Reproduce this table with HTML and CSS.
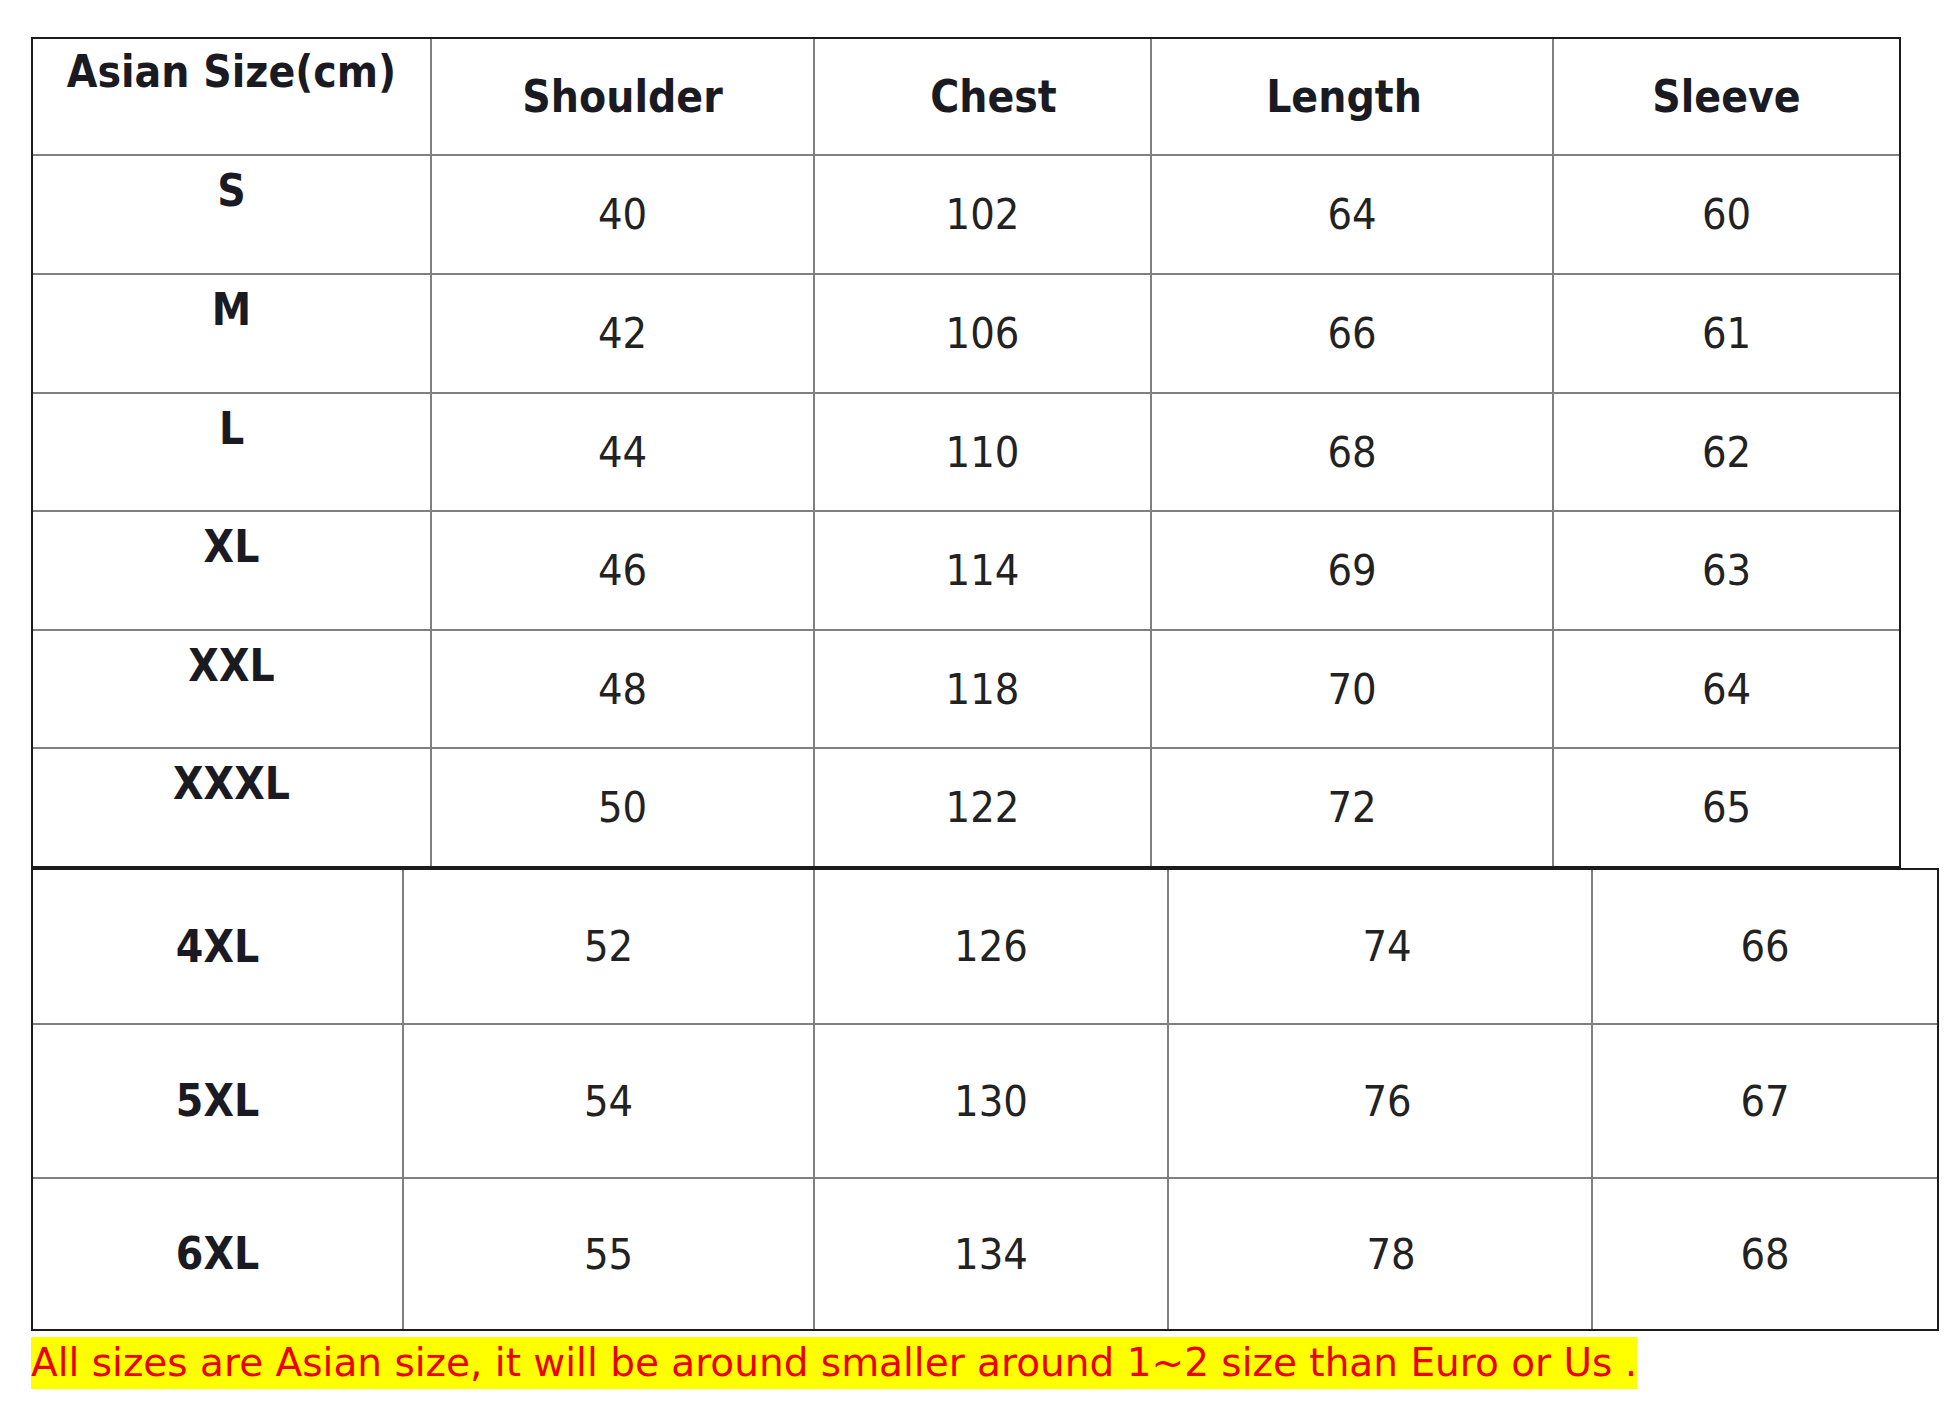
FILE: index.html
```html
<!DOCTYPE html>
<html>
<head>
<meta charset="utf-8">
<link rel="stylesheet" href="styles.css">
</head>
<body>
<div class="wrap">
  <div class="grid grid-top">
    <div class="cell head label-head">Asian Size(cm)</div>
    <div class="cell head">Shoulder</div>
    <div class="cell head shift-r">Chest</div>
    <div class="cell head shift-l">Length</div>
    <div class="cell head">Sleeve</div>

    <div class="cell label">S</div><div class="cell">40</div><div class="cell">102</div><div class="cell">64</div><div class="cell">60</div>
    <div class="cell label">M</div><div class="cell">42</div><div class="cell">106</div><div class="cell">66</div><div class="cell">61</div>
    <div class="cell label">L</div><div class="cell">44</div><div class="cell">110</div><div class="cell">68</div><div class="cell">62</div>
    <div class="cell label">XL</div><div class="cell">46</div><div class="cell">114</div><div class="cell">69</div><div class="cell">63</div>
    <div class="cell label">XXL</div><div class="cell">48</div><div class="cell">118</div><div class="cell">70</div><div class="cell">64</div>
    <div class="cell label">XXXL</div><div class="cell">50</div><div class="cell">122</div><div class="cell">72</div><div class="cell">65</div>
  </div>
  <div class="grid grid-bottom">
    <div class="cell label-b">4XL</div><div class="cell">52</div><div class="cell">126</div><div class="cell shift-a">74</div><div class="cell">66</div>
    <div class="cell label-b">5XL</div><div class="cell">54</div><div class="cell">130</div><div class="cell shift-a">76</div><div class="cell">67</div>
    <div class="cell label-b">6XL</div><div class="cell">55</div><div class="cell">134</div><div class="cell shift-b">78</div><div class="cell">68</div>
  </div>
  <div class="note">All sizes are Asian size, it will be around smaller around 1~2 size than Euro or Us .</div>
</div>
</body>
</html>
```

FILE: styles.css
```css
html, body {
  margin: 0;
  padding: 0;
  background: #ffffff;
}

.wrap {
  padding: 37px 0 0 31px;
  font-family: "DejaVu Sans Condensed", "DejaVu Sans", sans-serif;
  font-stretch: condensed;
  color: #222222;
}

.grid {
  display: grid;
  box-sizing: border-box;
  border: 2px solid #1c1c1c;
  background: #808080;
  gap: 2px;
}

.grid-top {
  width: 1870px;
  grid-template-columns: 397px 381px 335px 400px 345px;
  grid-template-rows: 115px 117px 117px 116px 117px 116px 117px;
}

.grid-bottom {
  width: 1908px;
  grid-template-columns: 369px 409px 352px 422px 344px;
  grid-template-rows: 153px 152px 150px;
}

.cell {
  background: #ffffff;
  display: flex;
  justify-content: center;
  align-items: center;
  font-size: 43px;
  line-height: 1.164;
  white-space: nowrap;
}

.head {
  font-weight: bold;
  font-size: 44px;
  color: #1a1a22;
}

.label-head {
  align-items: flex-start;
  padding-top: 7px;
}

.label {
  align-items: flex-start;
  padding-top: 9px;
  font-weight: bold;
  font-size: 44px;
  color: #1a1a22;
}

.label-b {
  font-weight: bold;
  font-size: 44px;
  color: #1a1a22;
}

.shift-r {
  padding-left: 22px;
}

.shift-l {
  padding-right: 16px;
}

.shift-a {
  padding-left: 14px;
}

.shift-b {
  padding-left: 22px;
}

.note {
  display: inline-block;
  margin-top: 6px;
  height: 52px;
  line-height: 52px;
  background: #ffff00;
  color: #ee0000;
  font-family: "DejaVu Sans", sans-serif;
  font-stretch: normal;
  font-size: 39px;
  white-space: nowrap;
}
```
